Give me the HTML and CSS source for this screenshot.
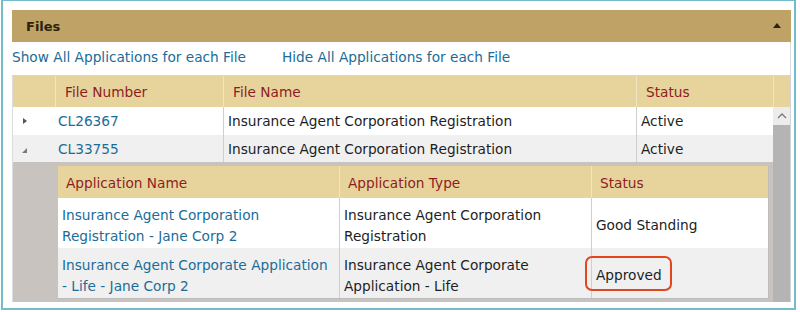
FILE: index.html
```html
<!DOCTYPE html>
<html>
<head>
<meta charset="utf-8">
<link rel="stylesheet" href="styles.css">
</head>
<body>
<div class="frame">
  <div class="panel">
    <div class="panel-head"><span class="title">Files</span><span class="caret"></span></div>
    <div class="links">
      <a class="link">Show All Applications for each File</a>
      <a class="link">Hide All Applications for each File</a>
    </div>
    <div class="grid">
      <div class="ghead">
        <div class="hc"></div>
        <div class="hc">File Number</div>
        <div class="hc">File Name</div>
        <div class="hc">Status</div>
        <div class="hc hc-sb"></div>
      </div>
      <div class="gbody">
        <div class="rows">
          <div class="row">
            <div class="c c-exp"><span class="tri-right"></span></div>
            <div class="c"><a class="link">CL26367</a></div>
            <div class="c c-sep">Insurance Agent Corporation Registration</div>
            <div class="c c-sep">Active</div>
          </div>
          <div class="row row-alt">
            <div class="c c-exp"><span class="tri-open"></span></div>
            <div class="c"><a class="link">CL33755</a></div>
            <div class="c c-sep">Insurance Agent Corporation Registration</div>
            <div class="c c-sep">Active</div>
          </div>
          <div class="detail">
            <div class="sub">
              <div class="shead">
                <div class="hc">Application Name</div>
                <div class="hc">Application Type</div>
                <div class="hc">Status</div>
              </div>
              <div class="srow">
                <div class="sc"><a class="link">Insurance Agent Corporation Registration - Jane Corp 2</a></div>
                <div class="sc c-sep">Insurance Agent Corporation Registration</div>
                <div class="sc c-sep">Good Standing</div>
              </div>
              <div class="srow row-alt">
                <div class="sc"><a class="link">Insurance Agent Corporate Application - Life - Jane Corp 2</a></div>
                <div class="sc c-sep">Insurance Agent Corporate Application - Life</div>
                <div class="sc c-sep hl-cell">Approved<span class="highlight"></span></div>
              </div>
            </div>
          </div>
        </div>
        <div class="scrollbar">
          <div class="sb-up"><svg width="10" height="6" viewBox="0 0 10 6"><path d="M1 5 L5 1 L9 5" fill="none" stroke="#7a7a7a" stroke-width="1.3"/></svg></div>
          <div class="sb-thumb"></div>
        </div>
      </div>
    </div>
  </div>
</div>
</body>
</html>
```

FILE: styles.css
```css
html, body {
  margin: 0;
  padding: 0;
  background: #ffffff;
}
body {
  width: 800px;
  height: 312px;
  overflow: hidden;
  font-family: "DejaVu Sans", sans-serif;
  font-size: 13.7px;
  color: #1e1e1e;
}
.frame {
  margin: 0 4px 0 1px;
  border: 2px solid #74bccc;
  border-top-width: 1px;
  padding: 9px 3px 0 9px;
  box-sizing: border-box;
  height: 310px;
}
.panel {
  width: 779px;
}
.panel-head {
  height: 32px;
  background: #bea266;
  display: flex;
  align-items: center;
  justify-content: space-between;
  padding: 0 10px 0 14px;
}
.title {
  font-weight: bold;
  font-size: 13px;
  color: #2c2208;
}
.caret {
  width: 0;
  height: 0;
  border-left: 4px solid transparent;
  border-right: 4px solid transparent;
  border-bottom: 5px solid #2a2416;
  margin-top: -2px;
}
.links {
  height: 33px;
  box-sizing: border-box;
  padding-bottom: 3px;
  display: flex;
  align-items: center;
  gap: 36px;
  border-right: 1px solid #d9d9d9;
}
.link {
  color: #1c6c97;
  text-decoration: none;
}
.grid {
  border-top: 1px solid #d4d4d4;
  border-left: 1px solid #dcdcdc;
  border-right: 1px solid #d4d4d4;
}
.ghead {
  display: grid;
  grid-template-columns: 42px 168px 413px 137px 17px;
  height: 31px;
  background: #e7d49d;
}
.ghead .hc {
  display: flex;
  align-items: center;
  padding-left: 9px;
  padding-top: 1px;
  color: #8e1c22;
  border-left: 1px solid #efe4c4;
}
.ghead .hc:first-child {
  border-left: none;
}
.gbody {
  display: flex;
  height: 195px;
}
.rows {
  width: 760px;
  display: flex;
  flex-direction: column;
}
.row {
  display: grid;
  grid-template-columns: 42px 168px 413px 137px;
  height: 28px;
  background: #ffffff;
}
.row:first-child {
  height: 29px;
}
.row-alt {
  background: #f0f0f0;
}
.c {
  display: flex;
  align-items: center;
  padding-left: 3px;
  padding-top: 1px;
}
.c-sep {
  border-left: 1px solid #cfcfcf;
  padding-left: 4px;
}
.c-exp {
  padding-left: 10px;
}
.tri-right {
  width: 0;
  height: 0;
  border-top: 3.5px solid transparent;
  border-bottom: 3.5px solid transparent;
  border-left: 4px solid #555555;
}
.tri-open {
  width: 0;
  height: 0;
  border-left: 5px solid transparent;
  border-bottom: 5px solid #7a7a7a;
  margin-left: -1px;
  margin-top: 3px;
}
.detail {
  flex: 1;
  background: #c9c3c0;
  padding: 4px 4px 3px 45px;
}
.sub {
  border-right: 1px solid #bdbdbd;
  border-bottom: 1px solid #bdbdbd;
  background: #ffffff;
}
.shead {
  display: grid;
  grid-template-columns: 281px 252px 177px;
  height: 32px;
  background: #e7d49d;
}
.shead .hc {
  display: flex;
  align-items: center;
  padding-left: 8px;
  padding-top: 1px;
  color: #8e1c22;
  border-left: 1px solid #efe4c4;
}
.shead .hc:first-child {
  border-left: none;
}
.srow {
  display: grid;
  grid-template-columns: 281px 252px 177px;
  height: 50px;
  background: #ffffff;
}
.srow.row-alt {
  background: #f0f0f0;
}
.sc {
  display: flex;
  align-items: center;
  padding: 5px 6px 0 4px;
  line-height: 21px;
}
.sc.c-sep {
  padding-left: 4px;
}
.hl-cell {
  position: relative;
}
.highlight {
  position: absolute;
  left: -7px;
  top: 8px;
  width: 83px;
  height: 31px;
  border: 2px solid #e2461f;
  border-radius: 7px;
}
.scrollbar {
  width: 18px;
  display: flex;
  flex-direction: column;
  background: #b4b4b4;
}
.sb-up {
  height: 18px;
  background: #ececec;
  display: flex;
  align-items: center;
  justify-content: center;
}
.sb-thumb {
  flex: 1;
  background: #b4b4b4;
}
```
